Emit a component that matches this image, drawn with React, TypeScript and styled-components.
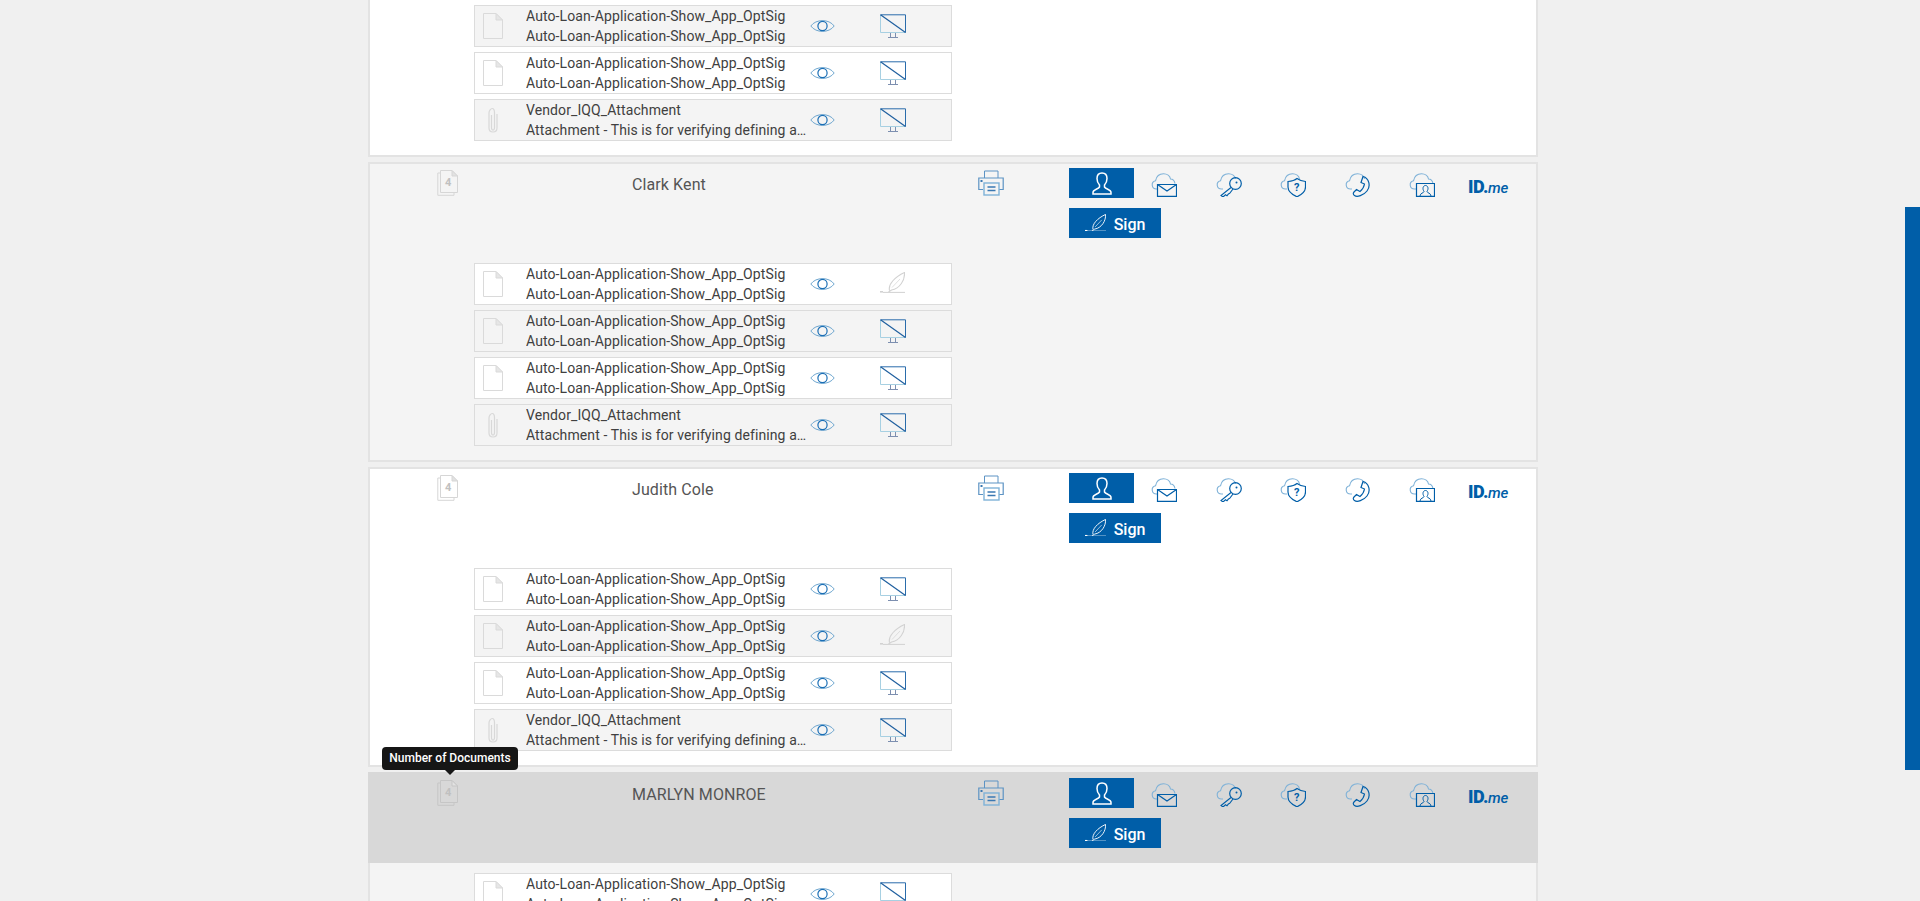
import React from "react";
import styled, { createGlobalStyle } from "styled-components";

const BLUE = "#005ea8";
const LIGHT = "#7fb2d8";

const GlobalStyle = createGlobalStyle`
  html, body {
    margin: 0;
    padding: 0;
    height: 100%;
    overflow: hidden;
    background: #f0f0f0;
    font-family: Roboto, "Liberation Sans", sans-serif;
  }
`;

const Page = styled.div`
  position: relative;
  height: 901px;
  overflow: hidden;
  padding-right: 14px;
  display: flex;
  justify-content: center;
`;

const ScrollThumb = styled.div`
  position: absolute;
  right: 0;
  top: 207px;
  width: 15px;
  height: 563px;
  background: ${BLUE};
`;

const List = styled.div`
  width: 1170px;
  display: flex;
  flex-direction: column;
  gap: 5px;
  flex: none;
`;

const Panel = styled.section<{ $alt?: boolean; $clipped?: boolean }>`
  border: 2px solid #e3e3e3;
  border-top-width: ${(p) => (p.$clipped ? 0 : 2)}px;
  background: ${(p) => (p.$alt ? "#f4f4f4" : "#fff")};
  padding: ${(p) => (p.$clipped ? "5px" : "0")} 0 14px;
  flex: none;
`;

const Header = styled.div<{ $active?: boolean }>`
  display: grid;
  grid-template-columns: 262px 346px 91px 1fr;
  height: 99px;
  box-sizing: border-box;
  background: ${(p) => (p.$active ? "#d8d8d8" : "transparent")};
  ${(p) => p.$active && "margin: -2px -2px 10px; padding: 2px 2px 0; height: 91px;"}
`;

const CountCell = styled.div`
  position: relative;
  padding: 6px 0 0 67px;
`;

const Tooltip = styled.div`
  position: absolute;
  left: 12px;
  top: -27px;
  width: 136px;
  height: 23px;
  border-radius: 4px;
  background: #161616;
  color: #fff;
  font-size: 12px;
  font-weight: 500;
  line-height: 23px;
  text-align: center;
  white-space: nowrap;

  &::after {
    content: "";
    position: absolute;
    left: 63px;
    top: 23px;
    border: 5px solid transparent;
    border-top-color: #161616;
    border-bottom-width: 0;
  }
`;

const Name = styled.div`
  padding-top: 11px;
  font-size: 16px;
  line-height: 19px;
  letter-spacing: 0.1px;
  color: #555;
`;

const PrintCell = styled.div`
  padding-top: 6px;
`;

const Actions = styled.div`
  display: flex;
  flex-direction: column;
  align-items: flex-start;
  padding-top: 4px;
  gap: 10px;
`;

const ActionRow = styled.div`
  display: flex;
`;

const ActionCell = styled.div`
  width: 64.6px;
  height: 30px;
  padding-top: 5px;
  box-sizing: border-box;
`;

const UserButton = styled.button`
  width: 65px;
  height: 30px;
  border: 0;
  padding: 0;
  margin-right: 17px;
  background: ${BLUE};
  display: flex;
  align-items: center;
  justify-content: center;
`;

const SignButton = styled.button`
  width: 92px;
  height: 30px;
  border: 0;
  padding: 3px 0 0;
  background: ${BLUE};
  color: #fff;
  font-family: inherit;
  font-size: 16px;
  font-weight: 500;
  display: flex;
  align-items: center;
  justify-content: center;
  gap: 8px;

  svg {
    margin-top: -4px;
  }
`;

const IdMe = styled.div`
  margin-left: -6px;
  padding-top: 10px;
  color: ${BLUE};
  font-size: 18px;
  font-weight: 900;
  line-height: 18px;
  letter-spacing: -0.5px;
  white-space: nowrap;

  em {
    font-size: 15px;
    font-weight: 500;
    letter-spacing: -0.2px;
  }
`;

const Rows = styled.div`
  margin-left: 104px;
  width: 478px;
  display: flex;
  flex-direction: column;
  gap: 5px;
`;

const Row = styled.div<{ $shaded?: boolean }>`
  display: grid;
  grid-template-columns: 51px 282px 28px 1fr;
  height: 42px;
  box-sizing: border-box;
  border: 1px solid #dcdcdc;
  background: ${(p) => (p.$shaded ? "#f4f4f4" : "#fff")};
`;

const IconCell = styled.div`
  padding: 7px 0 0 8px;
`;

const RowText = styled.div`
  min-width: 0;
  font-size: 14px;
  line-height: 20px;
  letter-spacing: 0.1px;
  color: #404040;
`;

const RowLine = styled.div`
  white-space: nowrap;
  overflow: hidden;
  text-overflow: ellipsis;
`;

const EyeCell = styled.div`
  display: flex;
  align-items: center;
  justify-content: center;
`;

const StateCell = styled.div`
  padding: 8px 0 0 44px;
`;

const Svg = styled.svg`
  display: block;
  fill: none;
`;

const FileIcon = () => (
  <Svg width="20" height="26" viewBox="0 0 20 26">
    <path d="M.5.5H13L19.5 7V25.5H.5Z" stroke="#dadada" />
    <path d="M13 .5V7H19.5Z" fill="#e6e6e6" stroke="#dadada" />
  </Svg>
);

const ClipIcon = () => (
  <Svg width="20" height="26" viewBox="0 0 20 26">
    <path
      d="M8.500 8V20.500C8.500 22 9.200 23 10 23S11.500 22 11.500 20.500V6C11.500 3 10.500 1.500 9.200 1.500S6 3.500 6 6V21C6 24 8 25 10 25S14 24 14 21V7"
      stroke="#d8d8d8"
      strokeWidth="1.200"
    />
  </Svg>
);

const EyeIcon = () => (
  <Svg width="25" height="16" viewBox="0 0 25 16">
    <path d="M.8 8C6 .8 19 .8 24.200 8C19 15.200 6 15.200 .8 8Z" stroke="#6ea6cf" />
    <circle cx="12.500" cy="8" r="4.600" stroke="#1a6eb5" strokeWidth="1.200" />
  </Svg>
);

const MonitorIcon = () => (
  <Svg width="26" height="24" viewBox="0 0 26 24">
    <path d="M.5 1V18.500H25.500" stroke="#a7d0e2" />
    <path d="M.5.8H25.500V18.500" stroke="#2a6cab" />
    <path d="M.5.8L25.500 18.500" stroke="#1f5f9f" strokeWidth="1.200" />
    <path d="M10.500 19V23M15.500 19V23M8 23.500H18" stroke="#7d8fb0" />
  </Svg>
);

const FeatherIcon = ({ color = "#d2d2d2", width = 25 }: { color?: string; width?: number }) => (
  <Svg width={width} height={width * 0.84} viewBox="0 0 25 21">
    <path d="M3 20.400H25" stroke={color} />
    <path d="M0 19.800H3" stroke={color} strokeWidth="1.600" />
    <path d="M9.500 18.500C8 12 15 5 24.500 .5C25 8 20 16.500 11.500 18L8.500 20" stroke={color} strokeWidth="1.100" />
    <path d="M12 15.500L20 7" stroke={color} strokeWidth=".7" />
  </Svg>
);

const StackIcon = ({ color }: { color: string }) => (
  <Svg width="21" height="26" viewBox="0 0 21 26">
    <path d="M3 3H.8V25.300H17V23" stroke={color} />
    <path d="M3.500.5H15L20.500 6V22.500H3.500Z" stroke={color} />
    <path d="M15 .5V6H20.500Z" fill="#e2e2e2" stroke={color} />
    <text x="8" y="16" fontSize="11" fontWeight="700" fontFamily="Roboto, sans-serif" fill="#c0c0c0">
      4
    </text>
  </Svg>
);

const PrinterIcon = () => (
  <Svg width="26" height="26" viewBox="0 0 26 26">
    <path d="M6.500 8V1H20V8" stroke="#5c93c4" />
    <path d="M5 19.500H.8V8H25.200V19.500H21" stroke="#5c93c4" strokeWidth="1.200" />
    <rect x="6" y="13" width="15" height="12" stroke="#7fb2d8" strokeWidth="1.400" />
    <path d="M9.500 17H17.500M9.500 20.500H17.500" stroke="#3a78b2" strokeWidth="1.300" />
    <rect x="2.500" y="10" width="2" height="2" fill="#3a78b2" />
  </Svg>
);

const UserIcon = () => (
  <Svg width="20" height="23" viewBox="0 0 20 23">
    <path
      d="M10 1C6.500 1 5 3.500 5 6.500C5 9.500 6 11.500 7.500 13V15C6 17.500 1 17.500 1 20.500V22H19V20.500C19 17.500 14 17.500 12.500 15V13C14 11.500 15 9.500 15 6.500C15 3.500 13.500 1 10 1Z"
      stroke="#fff"
      strokeWidth="1.500"
    />
  </Svg>
);

const CloudFrame = ({ wide, children }: { wide?: boolean; children: React.ReactNode }) => (
  <Svg width="26" height="24" viewBox="0 0 26 24">
    <path
      d={
        "M7 16H5.500C.5 16 -.5 9 4.500 7.800C5.500 3 9 .8 12.500 .8C16 .8 19 3 19.500 6" +
        (wide ? "C21.500 6 23.500 8 24 10.500" : "")
      }
      stroke={LIGHT}
      strokeWidth="1.100"
    />
    {children}
  </Svg>
);

const MailIcon = () => (
  <CloudFrame wide>
    <path d="M6.500 11.500H25.500V23.300H6.500ZM6.500 11.500L16 18L25.500 11.500" stroke={BLUE} strokeWidth="1.200" />
  </CloudFrame>
);

const KeyIcon = () => (
  <CloudFrame>
    <circle cx="19.500" cy="10.500" r="5.800" stroke={BLUE} strokeWidth="1.200" />
    <circle cx="20.500" cy="9.500" r="1" fill={BLUE} />
    <path
      d="M15 14.500L5 22.500L7 24L9.500 21.800L11 22.800L12.500 20.800L13.500 20.500L17 16"
      stroke={BLUE}
      strokeWidth="1.100"
    />
  </CloudFrame>
);

const ShieldIcon = () => (
  <CloudFrame>
    <path
      d="M8 8.500Q14 8 17 5.500Q20.500 8 25.500 8.500V14C25.500 19 21 22 17 23.800C13 22 8 19 8 14Z"
      stroke={BLUE}
      strokeWidth="1.200"
    />
    <text x="14" y="18" fontSize="11" fontWeight="700" fontFamily="Roboto, sans-serif" fill={BLUE}>
      ?
    </text>
  </CloudFrame>
);

const PhoneIcon = () => (
  <CloudFrame>
    <path
      d="M18 3.500C24 5 26 13 22 18C18.500 22.500 12 24.500 9.500 22.500C8 21.500 8 20 9 19L11.500 16.500L15 18.500C17.500 16.500 19 14 19.500 11L16 9.500L18 3.500Z"
      stroke={BLUE}
      strokeWidth="1.200"
    />
  </CloudFrame>
);

const BoothIcon = () => (
  <CloudFrame wide>
    <path d="M7.500 10.500H25.500V23.300H7.500Z" stroke={BLUE} strokeWidth="1.200" />
    <path
      d="M16.500 12.500C14.800 12.500 14 14 14 15.500C14 17 14.800 18 15 18.500C15 20 11 20 11 23M16.500 12.500C18.200 12.500 19 14 19 15.500C19 17 18.200 18 18 18.500C18 20 22 20 22 23"
      stroke={BLUE}
    />
  </CloudFrame>
);

const cloudActions = [MailIcon, KeyIcon, ShieldIcon, PhoneIcon, BoothIcon];

interface Doc {
  title: string;
  note: string;
  attachment?: boolean;
  signing?: boolean;
}

const loanDoc = (signing?: boolean): Doc => ({
  title: "Auto-Loan-Application-Show_App_OptSig",
  note: "Auto-Loan-Application-Show_App_OptSig",
  signing,
});

const vendorDoc: Doc = {
  title: "Vendor_IQQ_Attachment",
  note: "Attachment - This is for verifying defining attachments",
  attachment: true,
};

const signers = [
  { name: "Clark Kent", alt: true, docs: [loanDoc(true), loanDoc(), loanDoc(), vendorDoc] },
  { name: "Judith Cole", alt: false, docs: [loanDoc(), loanDoc(true), loanDoc(), vendorDoc] },
  { name: "MARLYN MONROE", alt: true, active: true, docs: [loanDoc(), loanDoc(), loanDoc(), vendorDoc] },
];

const DocRow = ({ doc, shaded }: { doc: Doc; shaded: boolean }) => (
  <Row $shaded={shaded}>
    <IconCell>{doc.attachment ? <ClipIcon /> : <FileIcon />}</IconCell>
    <RowText>
      <RowLine>{doc.title}</RowLine>
      <RowLine>{doc.note}</RowLine>
    </RowText>
    <EyeCell>
      <EyeIcon />
    </EyeCell>
    <StateCell>{doc.signing ? <FeatherIcon /> : <MonitorIcon />}</StateCell>
  </Row>
);

const App = () => (
  <Page>
    <GlobalStyle />
    <List>
      <Panel $clipped>
        <Rows>
          <DocRow doc={loanDoc()} shaded />
          <DocRow doc={loanDoc()} shaded={false} />
          <DocRow doc={vendorDoc} shaded />
        </Rows>
      </Panel>
      {signers.map((s) => (
        <Panel key={s.name} $alt={s.alt}>
          <Header $active={s.active}>
            <CountCell>
              {s.active && <Tooltip>Number of Documents</Tooltip>}
              <StackIcon color={s.active ? "#c6c6c6" : "#d6d6d6"} />
            </CountCell>
            <Name>{s.name}</Name>
            <PrintCell>
              <PrinterIcon />
            </PrintCell>
            <Actions>
              <ActionRow>
                <UserButton>
                  <UserIcon />
                </UserButton>
                {cloudActions.map((Icon, i) => (
                  <ActionCell key={i}>
                    <Icon />
                  </ActionCell>
                ))}
                <IdMe>
                  ID.<em>me</em>
                </IdMe>
              </ActionRow>
              <SignButton>
                <FeatherIcon color="#fff" width={21} />
                Sign
              </SignButton>
            </Actions>
          </Header>
          <Rows>
            {s.docs.map((d, i) => (
              <DocRow key={i} doc={d} shaded={i % 2 === 1} />
            ))}
          </Rows>
        </Panel>
      ))}
    </List>
    <ScrollThumb />
  </Page>
);

export default App;
